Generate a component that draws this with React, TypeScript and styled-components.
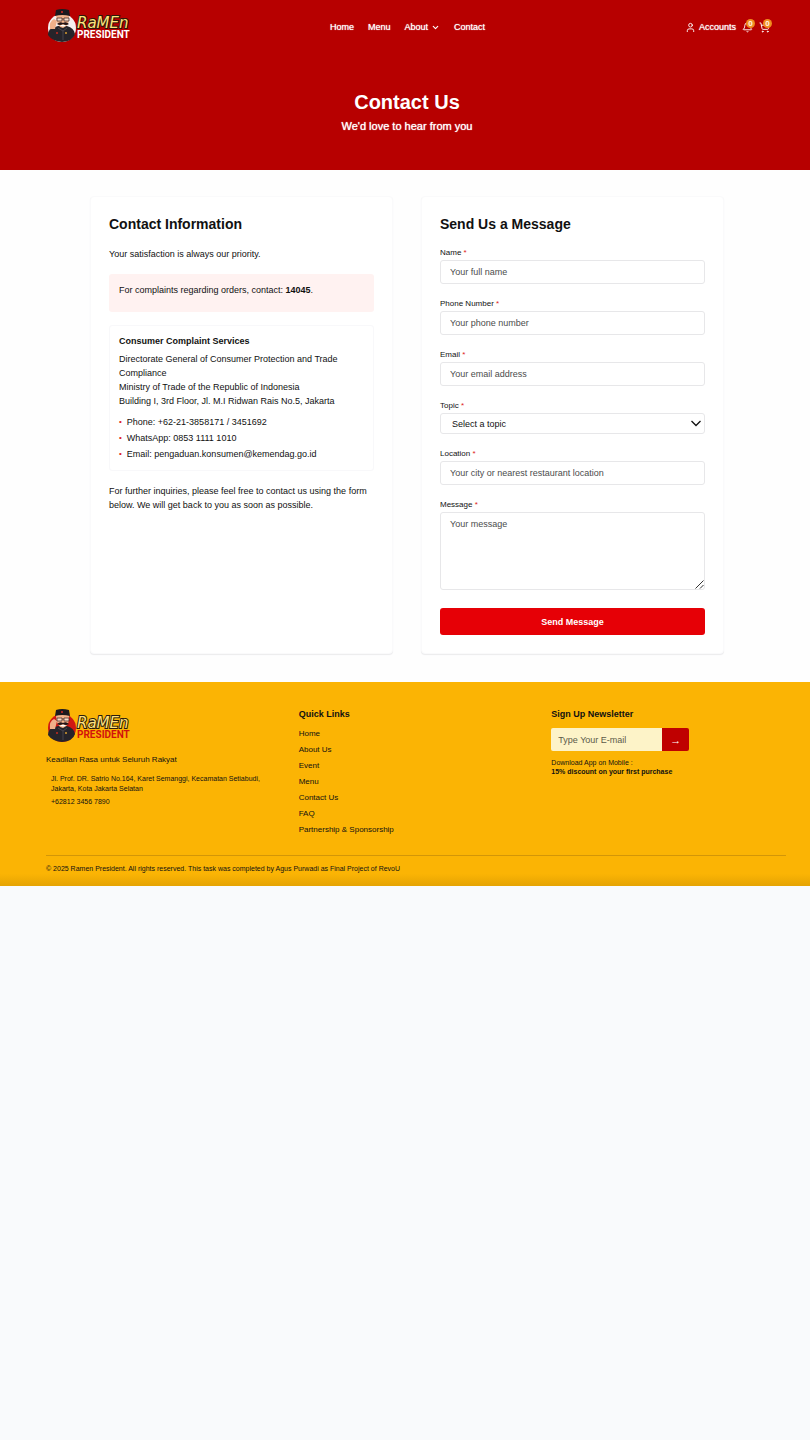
import React from "react";
import styled, { createGlobalStyle } from "styled-components";
import { Bell, ChevronDown, ShoppingCart, User } from "lucide-react";

const GlobalStyle = createGlobalStyle`
  *, *::before, *::after { box-sizing: border-box; }
  body {
    margin: 0;
    background: #f9fafc;
    color: #111;
    font: 9px/14px "Liberation Sans", Arial, sans-serif;
  }
  h1, h2, h3, p, ul, address { margin: 0; padding: 0; font-style: normal; }
  ul { list-style: none; }
  a { color: inherit; text-decoration: none; }
  input, select, textarea, button { font: inherit; color: inherit; margin: 0; border-radius: 0; }
`;

const Header = styled.header`
  background: #b70000;
  color: #fff;
`;

const TopBar = styled.div`
  display: flex;
  align-items: center;
  justify-content: space-between;
  height: 54px;
  padding: 0 40px 0 46px;
  text-shadow: 0 0 1px #fff;
`;

const LogoLink = styled.a`
  display: block;
  width: 84px;
  height: 36px;
`;

const Nav = styled.nav`
  display: flex;
  align-items: center;
  gap: 14px;
`;

const NavLink = styled.a`
  display: flex;
  align-items: center;
  gap: 3px;
`;

const Actions = styled.div`
  display: flex;
  align-items: center;
  gap: 6px;
`;

const ActionLink = styled.a`
  position: relative;
  display: flex;
  align-items: center;
  gap: 3px;
`;

const Badge = styled.span`
  position: absolute;
  top: -3px;
  right: -2px;
  width: 9px;
  height: 9px;
  border-radius: 50%;
  background: #f08c1c;
  font-size: 7px;
  line-height: 9px;
  text-align: center;
`;

const Hero = styled.div`
  padding: 34px 20px 36px 24px;
  text-align: center;
`;

const HeroTitle = styled.h1`
  font-size: 20px;
  line-height: 28px;
`;

const HeroText = styled.p`
  margin-top: 2px;
  font-size: 11px;
  line-height: 16px;
  text-shadow: 0 0 1px #fff;
`;

const Main = styled.main`
  display: grid;
  grid-template-columns: 1fr 1fr;
  gap: 28px;
  padding: 26px 86px 28px 90px;
  background: #fefefe;
`;

const Card = styled.section`
  min-width: 0;
  padding: 18px;
  border: 1px solid #fafafb;
  border-radius: 4px;
  background: #fff;
  box-shadow: 0 1px 1px #ebebed;
`;

const CardTitle = styled.h2`
  margin-bottom: 14px;
  font-size: 14px;
  line-height: 18px;
`;

const Alert = styled.div`
  margin: 13px 0;
  padding: 9px 10px 15px;
  border-radius: 3px;
  background: #fff2f1;
`;

const Services = styled.div`
  margin-bottom: 13px;
  padding: 8px 9px 9px;
  border: 1px solid #f8f8fa;
  border-radius: 3px;
`;

const ServicesTitle = styled.h3`
  margin-bottom: 4px;
  font-size: 9px;
`;

const ContactList = styled.ul`
  display: grid;
  gap: 2px;
  margin-top: 7px;
`;

const ContactItem = styled.li`
  display: flex;
  gap: 5px;

  &::before {
    content: "•";
    color: #d22;
    font-size: 8px;
  }
`;

const Form = styled.form`
  display: grid;
  gap: 14px;
`;

const Field = styled.div`
  display: grid;
  gap: 1px;
`;

const Label = styled.label`
  font-size: 8px;
  line-height: 12px;
`;

const Required = styled.span`
  color: #d22;
`;

const fieldBox = `
  display: block;
  width: 100%;
  border: 1px solid #e7e7e9;
  border-radius: 3px;
  background: #fff;
  outline: 0;
  &::placeholder { color: #4c4c4c; opacity: 1; }
`;

const TextInput = styled.input`
  ${fieldBox}
  height: 24px;
  padding: 0 9px;
`;

const ControlWrap = styled.div`
  position: relative;
`;

const Select = styled.select`
  ${fieldBox}
  appearance: none;
  height: 21px;
  padding: 0 11px;
`;

const SelectArrow = styled.svg`
  position: absolute;
  top: 7px;
  right: 4px;
  width: 10px;
  height: 7px;
  pointer-events: none;
`;

const TextArea = styled.textarea`
  ${fieldBox}
  height: 78px;
  padding: 4px 9px;
  resize: vertical;
  &::-webkit-resizer { background: transparent; }
`;

const Grip = styled.svg`
  position: absolute;
  right: 1px;
  bottom: 1px;
  width: 9px;
  height: 9px;
  pointer-events: none;
`;

const SubmitButton = styled.button`
  height: 27px;
  margin-top: 4px;
  border: 0;
  border-radius: 3px;
  background: #e60006;
  color: #fff;
  font-weight: 700;
`;

const Footer = styled.footer`
  padding: 25px 24px 11px 46px;
  background: linear-gradient(#fbb404 0, #fbb404 94%, #e5a303 100%);
`;

const FooterColumns = styled.div`
  display: grid;
  grid-template-columns: repeat(3, 1fr);
  gap: 18px;
  padding-bottom: 19px;
`;

const Tagline = styled.p`
  margin-top: 9px;
  font-size: 8px;
  line-height: 12px;
`;

const Address = styled.address`
  display: grid;
  gap: 3px;
  margin-top: 8px;
  padding-left: 5px;
  font-size: 7px;
  line-height: 10px;
`;

const FooterLogo = styled(LogoLink)`
  height: 38px;
  padding-top: 2px;
`;

const FooterTitle = styled.h3`
  margin-bottom: 7px;
  font-size: 9px;
`;

const Links = styled.ul`
  display: grid;
  gap: 4px;
  font-size: 8px;
  line-height: 12px;
`;

const Newsletter = styled.form`
  display: flex;
  width: 138px;
  height: 23px;
  border-radius: 2px;
  overflow: hidden;
`;

const NewsletterInput = styled.input`
  flex: 1;
  min-width: 0;
  padding: 0 7px;
  border: 0;
  background: #fdf3c8;
  &::placeholder { color: #5c5a48; opacity: 1; }
`;

const NewsletterButton = styled.button`
  width: 27px;
  padding: 0;
  border: 0;
  background: #bf0000;
  color: #fff;
  font-size: 11px;
`;

const AppNote = styled.p`
  margin-top: 7px;
  font-size: 7px;
  line-height: 9px;
`;

const Copyright = styled.p`
  padding-top: 7px;
  border-top: 1px solid #d39607;
  font-size: 7px;
  line-height: 12px;
`;

const LogoWord = styled.text`
  font-family: Roboto, sans-serif;
  font-weight: 700;
  font-size: 10px;
  text-shadow: none;
`;

const LogoScript = styled.text`
  font-family: "DejaVu Sans", sans-serif;
  font-style: italic;
  font-size: 15px;
  paint-order: stroke;
  text-shadow: none;
`;

function Logo({ disc, word }: { disc: string; word: string }) {
  return (
    <svg width="90" height="36" viewBox="0 1 90 36" role="img" aria-label="Ramen President">
      <circle cx="16" cy="20" r="14" fill={disc} />
      <path d="M2 27 Q2 22 6 20 L12 18 H21 Q28 20 29 26 Q27 33 16 34 Q6 33 2 27Z" fill="#26242a" />
      <path d="M4 21 Q3 13 8 11 L11 13 L9 21Z" fill="#f0b08a" />
      <path d="M10 7 H23 Q24 18 17 20 Q10 19 10 7Z" fill="#f3b48d" />
      <path d="M9 8 L10 2 Q16 0 23 2 L24 8 Q16 6 9 8Z" fill="#1d1a1e" />
      <circle cx="16" cy="4" r="1" fill="#d92b20" />
      <path d="M11 10h5v3h-5zM18 10h5v3h-5zM16 11h2" fill="#f9dcc8" stroke="#332020" strokeWidth="0.7" />
      <path d="M11 16 Q14 13 17 15 Q20 13 23 16 Q20 18 17 16 Q14 18 11 16Z" fill="#231416" />
      <path d="M14 17 Q17 20 20 17Z" fill="#fff" />
      <path d="M12 20 L17 23 L21 20 M17 23 V32" fill="none" stroke="#55515a" strokeWidth="0.7" />
      <circle cx="20" cy="25" r="1" fill="#d49b31" />
      <circle cx="11" cy="25" r="1" fill="#c82a20" />
      <LogoWord x="31" y="30" fill={word}>PRESIDENT</LogoWord>
      <LogoScript x="31" y="20" fill="#ffe27c" stroke="#2a1a0c" strokeWidth="2">RaMEn</LogoScript>
    </svg>
  );
}

function FieldLabel({ id, children }: { id: string; children: React.ReactNode }) {
  return (
    <Label htmlFor={id}>
      {children} <Required>*</Required>
    </Label>
  );
}

function InputField({ id, label, type = "text", placeholder }: { id: string; label: string; type?: string; placeholder: string }) {
  return (
    <Field>
      <FieldLabel id={id}>{label}</FieldLabel>
      <TextInput id={id} type={type} placeholder={placeholder} />
    </Field>
  );
}

const quickLinks = ["Home", "About Us", "Event", "Menu", "Contact Us", "FAQ", "Partnership & Sponsorship"];

export default function App() {
  return (
    <>
      <GlobalStyle />
      <Header>
        <TopBar>
          <LogoLink href="#"><Logo disc="#f6eeee" word="#fff" /></LogoLink>
          <Nav>
            <NavLink href="#">Home</NavLink>
            <NavLink href="#">Menu</NavLink>
            <NavLink href="#">About <ChevronDown size={9} strokeWidth={3} /></NavLink>
            <NavLink href="#">Contact</NavLink>
          </Nav>
          <Actions>
            <ActionLink href="#"><User size={11} />Accounts</ActionLink>
            <ActionLink href="#" aria-label="Notifications"><Bell size={11} /><Badge>0</Badge></ActionLink>
            <ActionLink href="#" aria-label="Cart"><ShoppingCart size={11} /><Badge>0</Badge></ActionLink>
          </Actions>
        </TopBar>
        <Hero>
          <HeroTitle>Contact Us</HeroTitle>
          <HeroText>We'd love to hear from you</HeroText>
        </Hero>
      </Header>
      <Main>
        <Card>
          <CardTitle>Contact Information</CardTitle>
          <p>Your satisfaction is always our priority.</p>
          <Alert>For complaints regarding orders, contact: <strong>14045</strong>.</Alert>
          <Services>
            <ServicesTitle>Consumer Complaint Services</ServicesTitle>
            <p>
              Directorate General of Consumer Protection and Trade Compliance
              <br />
              Ministry of Trade of the Republic of Indonesia
              <br />
              Building I, 3rd Floor, Jl. M.I Ridwan Rais No.5, Jakarta
            </p>
            <ContactList>
              <ContactItem>Phone: +62-21-3858171 / 3451692</ContactItem>
              <ContactItem>WhatsApp: 0853 1111 1010</ContactItem>
              <ContactItem>Email: pengaduan.konsumen@kemendag.go.id</ContactItem>
            </ContactList>
          </Services>
          <p>For further inquiries, please feel free to contact us using the form below. We will get back to you as soon as possible.</p>
        </Card>
        <Card>
          <CardTitle>Send Us a Message</CardTitle>
          <Form>
            <InputField id="name" label="Name" placeholder="Your full name" />
            <InputField id="phone" label="Phone Number" type="tel" placeholder="Your phone number" />
            <InputField id="email" label="Email" type="email" placeholder="Your email address" />
            <Field>
              <FieldLabel id="topic">Topic</FieldLabel>
              <ControlWrap>
                <Select id="topic">
                  <option>Select a topic</option>
                </Select>
                <SelectArrow viewBox="0 0 10 7" fill="none" stroke="#111" strokeWidth="1.3">
                  <path d="M0.5 1 L5 5.5 L9.5 1" />
                </SelectArrow>
              </ControlWrap>
            </Field>
            <InputField id="location" label="Location" placeholder="Your city or nearest restaurant location" />
            <Field>
              <FieldLabel id="message">Message</FieldLabel>
              <ControlWrap>
                <TextArea id="message" placeholder="Your message" />
                <Grip viewBox="0 0 9 9" stroke="#333" strokeWidth="1">
                  <path d="M0.5 8.5 L8.5 0.5 M5 8.5 L8.5 5" />
                </Grip>
              </ControlWrap>
            </Field>
            <SubmitButton type="button">Send Message</SubmitButton>
          </Form>
        </Card>
      </Main>
      <Footer>
        <FooterColumns>
          <div>
            <FooterLogo href="#"><Logo disc="#d01812" word="#d3120c" /></FooterLogo>
            <Tagline>Keadilan Rasa untuk Seluruh Rakyat</Tagline>
            <Address>
              <p>Jl. Prof. DR. Satrio No.164, Karet Semanggi, Kecamatan Setiabudi, Jakarta, Kota Jakarta Selatan</p>
              <p>+62812 3456 7890</p>
            </Address>
          </div>
          <div>
            <FooterTitle>Quick Links</FooterTitle>
            <Links>
              {quickLinks.map((name) => (
                <li key={name}><a href="#">{name}</a></li>
              ))}
            </Links>
          </div>
          <div>
            <FooterTitle>Sign Up Newsletter</FooterTitle>
            <Newsletter>
              <NewsletterInput type="email" aria-label="E-mail" placeholder="Type Your E-mail" />
              <NewsletterButton type="button" aria-label="Subscribe">→</NewsletterButton>
            </Newsletter>
            <AppNote>
              Download App on Mobile :
              <br />
              <strong>15% discount on your first purchase</strong>
            </AppNote>
          </div>
        </FooterColumns>
        <Copyright>© 2025 Ramen President. All rights reserved. This task was completed by Agus Purwadi as Final Project of RevoU</Copyright>
      </Footer>
    </>
  );
}
